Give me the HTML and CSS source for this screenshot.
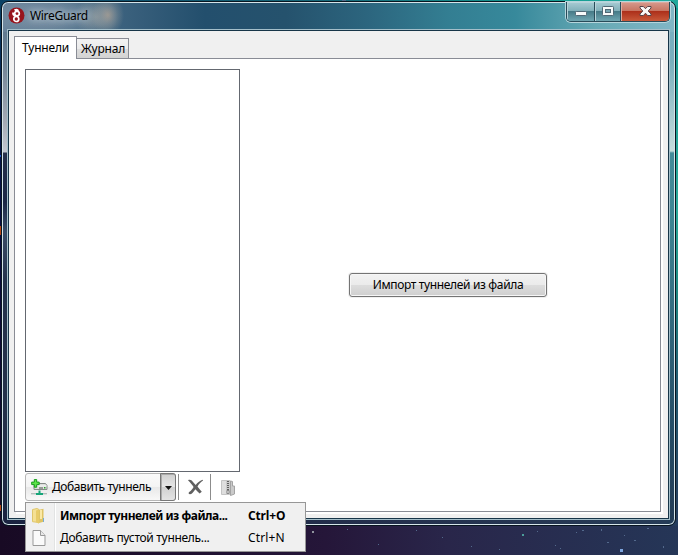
FILE: index.html
```html
<!DOCTYPE html>
<html lang="ru">
<head>
<meta charset="utf-8">
<title>WireGuard</title>
<link rel="stylesheet" href="styles.css">
</head>
<body>
<svg class="stars" width="678" height="555" viewBox="0 0 678 555" aria-hidden="true">
  <path fill="#1b55c9" d="M0 155h1v2H0z"/><path fill="#b54513" d="M0 226h1v9H0zM0 505h1v6H0z"/>
  <path fill="#4b9d9a" d="M522 534h2v2h-2z"/><path fill="#7da5de" d="M620 549h3v3h-3z"/><path fill="#91959f" d="M312 531h2v2h-2z"/>
  <path fill="#53698c" d="M537 531h1v1h-1zM576 532h1v1h-1zM607 542h2v1h-2zM634 540h2v1h-2zM647 528h2v1h-2zM663 546h1v2h-1zM555 545h1v1h-1zM560 548h1v1h-1zM582 530h2v1h-2zM601 529h1v2h-1zM624 535h1v1h-1zM347 529h1v1h-1zM378 544h1v1h-1zM442 537h1v1h-1zM471 546h1v1h-1zM416 530h1v1h-1zM499 549h1v1h-1zM342 0h4v1h-4z"/>
</svg>
<div class="window">
  <header class="titlebar">
    <svg class="logo" width="17" height="17" viewBox="0 0 17 17">
      <circle cx="8.500" cy="8.500" r="8" fill="#98151d"/>
      <path d="M6 2.300q3.800-1.600 5 .9L9.700 4.700 7 4z" fill="#fff"/>
      <g fill="none" stroke="#fff" stroke-width="1.700"><circle cx="9" cy="6.600" r="2.300"/><circle cx="8.300" cy="12" r="2.500"/><path d="M5 5.500q-.3 2.500 2.300 3.200"/></g>
    </svg>
    <span class="title">WireGuard</span>
    <div class="controls">
      <span class="control"><svg width="13" height="12" viewBox="0 0 13 12"><rect x=".5" y="6.500" width="11" height="4" rx=".8" fill="#f8fafa" stroke="#526976"/></svg></span>
      <span class="control"><svg width="13" height="12" viewBox="0 0 13 12"><rect x=".5" y="1.500" width="11" height="9" rx=".8" fill="#f8fafa" stroke="#526976"/><rect x="3.500" y="4.500" width="5" height="3" fill="#76a5b1" stroke="#526976"/></svg></span>
      <span class="control close"><svg width="13" height="12" viewBox="0 0 13 12"><path d="M1 1.500h3.400l2.100 2.200 2.100-2.200H12v1.500L9.200 6 12 9v1.500H8.600L6.500 8.200l-2.100 2.300H1V9l2.800-3L1 3z" fill="#faf7f6" stroke="#57444a"/></svg></span>
    </div>
  </header>
  <main class="client">
    <nav class="tabs"><span class="tab active">Туннели</span><span class="tab">Журнал</span></nav>
    <section class="pane">
      <div class="sidebar">
        <div class="list"></div>
        <div class="toolbar">
          <div class="split">
            <div class="add">
              <svg width="17" height="17" viewBox="0 0 17 17">
                <path d="M3 6.500 5 4.500h9.500l1.500 2v4H3z" fill="#dde0dd" stroke="#858a86"/><path d="M4 7h11.500" stroke="#f8f8f8"/><path d="M8 9h4" stroke="#555"/><path d="M13 8h1.500v1.500H13z" fill="#26a529"/>
                <path d="M7.500 11.500h2v2.500H12v2H5v-2h2.500z" fill="#15a578"/><path d="M0 14.500h5m7 0h4" stroke="#b2bdba"/><path d="M0 15.500h5m7 0h4" stroke="#d8dedc"/>
                <path d="M3.300.6h2.400v2.500h2.500v2.500H5.700v2.600H3.300V5.600H.7V3.100h2.600z" fill="#5ee448" stroke="#159c1b"/>
              </svg>
              <span class="add-text">Добавить туннель</span>
            </div>
            <div class="arrow"><svg width="7" height="4" viewBox="0 0 7 4"><path d="M0 0h7L3.500 4z" fill="#111"/></svg></div>
          </div>
          <span class="separator"></span>
          <svg class="delete" width="17" height="16" viewBox="0 0 17 16"><path d="M1 1.200c2-.8 3.600-.1 5 1.700l2.700 3C10.500 3.600 12.500 2 15.500.8l.6.700c-2.500 1.700-4.300 3.600-5.600 6 1.500 1.900 2.700 3.400 4.300 5.200l-2.200 1.800C10.800 13 9.500 11.700 8.400 10.300 6.500 12.600 5.400 15 3.200 15.300c-1.500.2-2.200-1.300-1-2.200 2-1.600 3.200-3 4.400-5.100C5 5.700 3.500 3.500 1 1.200z" fill="#606060"/></svg>
          <span class="separator second"></span>
          <svg class="zip" width="15" height="16" viewBox="0 0 15 16"><path d="M.5.500H9v14H.5z" fill="#dedede" stroke="#c4c4c4"/><path d="M9.500 1l2 .5V6h2v8l-4 1.500z" fill="#cacaca" stroke="#a4a4a4"/><path d="M5 1h4v14H5z" fill="#c9c9c9"/><path d="M7 1v9" stroke="#606060" stroke-width="2" stroke-dasharray="1 1"/><path d="M6 10.500h2v3H6z" fill="#eee" stroke="#888"/></svg>
        </div>
      </div>
      <div class="details"><button class="import">Импорт туннелей из файла</button></div>
    </section>
  </main>
</div>
<div class="menu">
  <div class="item default">
    <svg width="16" height="16" viewBox="0 0 16 16"><path d="M7 2 12.500.8v13L8 15z" fill="#dfc464"/><path d="M1.500 1.500 6 .5l2 1v13l-6.500-.8z" fill="#f4e095" stroke="#dfc66c"/><path d="M5 2.500 8 1.500V15.700L5 14z" fill="#e7cb69"/><path d="M9 2h2v9H9z" fill="#fae8a6"/><path d="M12 10h1v4h-1z" fill="#78acd0"/></svg>
    <span class="label">Импорт туннелей из файла...</span><span class="key">Ctrl+O</span>
  </div>
  <div class="item">
    <svg width="16" height="16" viewBox="0 0 16 16"><path d="M2 .5h7.500l4.500 5v10H2z" fill="#fafafa" stroke="#999"/><path d="M9.500.5v5H14" fill="#e7e7e7" stroke="#999"/></svg>
    <span class="label">Добавить пустой туннель...</span><span class="key">Ctrl+N</span>
  </div>
</div>
</body>
</html>
```
FILE: styles.css
```css
* { box-sizing: border-box; }
body {
  margin: 0; padding: 1px 2px 0 1px; width: 678px; height: 555px; overflow: hidden; position: relative;
  font: 12px/16px "Noto Sans", "Open Sans", sans-serif; color: #000;
  background:
    linear-gradient(90deg, #0a4265, #176b7b 50%, #139b91 80%, #20a99c) 0 0 / 678px 8px no-repeat,
    linear-gradient(#149b91, #2aaa9a 40%, #1d8c83 54%, #225c72 72%, #253b5b) 670px 0 / 8px 526px no-repeat,
    linear-gradient(#0a4265, #071e50 20%, #080a3d 45%, #170b29) 0 0 / 8px 526px no-repeat,
    linear-gradient(90deg, #180a24, #251639 48%, #29264a 66%, #253657);
}
.stars { position: absolute; left: 0; top: 0; }
span { white-space: nowrap; }
svg { display: block; flex: none; }
.window {
  position: relative; width: 675px; height: 525px; padding: 0 6px 6px; border: 1px solid #081520; border-radius: 7px;
  box-shadow: inset 0 0 0 1px #d5e4e9;
  background:
    linear-gradient(#607a90, #78899b 40px, #a4aab5 90px, #c2c6cf 120px, #26304b 121px, #1b2746 170px, #3a4c67 200px, #24324d 250px, #24314a 380px, #1a2340) 0 30px / 8px 495px no-repeat,
    linear-gradient(#78afc0, #79afbd 30px, #c5dddd 119px, #438b99 121px, #3d8693 180px, #336c80 280px, #244c65 400px, #233b55) 665px 30px / 10px 495px no-repeat,
    radial-gradient(ellipse 16px 20px at 106px 13px, #b5a697b0, #91989b80 45%, transparent),
    radial-gradient(ellipse 22px 20px at 94px 15px, #a3a9a8a0, transparent),
    radial-gradient(ellipse 65px 22px at 45px 14px, #8498a9, transparent),
    linear-gradient(90deg, #67829a, #3f6480 16%, #234f6d 30%, #25526d 42%, #2c657e 54%, #337e92 66%, #37899b 76%, #67a9b5 88%, #82b7c6) 0 0 / 675px 30px no-repeat,
    linear-gradient(90deg, #1a2340, #24304d 60%, #263c57);
}
.titlebar { display: flex; align-items: flex-start; height: 28px; }
.logo { margin: 5px 5px 0 0; }
.title { margin-top: 6px; letter-spacing: -.32px; text-shadow: 0 0 7px #b8c9d5, 0 0 7px #a8bdca; }
.controls { display: flex; width: 104px; height: 20px; margin: 0 -1px 0 auto; border: 1px solid #294b59; border-top: 0; border-radius: 0 0 5px 5px; box-shadow: 0 0 0 1px #b6d5dc; overflow: hidden; }
.control { display: flex; width: 28px; padding: 3px 0 0 8px; border-right: 1px solid #294b59; background: linear-gradient(#a8cbd3, #80afb9 48%, #477b88 50%, #6fa6b1); box-shadow: inset 1px 1px #b8d4db; }
.control + .control { width: 27px; padding-left: 7px; }
.control.close { width: 48px; padding-left: 18px; border: 0; background: linear-gradient(#d59a8e, #c77461 48%, #ad301b 50%, #c8593a); box-shadow: inset 1px 1px #dcaba0; }
.client { height: 489px; border: 1px solid #173548; box-shadow: 0 0 0 1px #a4bfca; background: #f0f0f0; padding: 5px 5px 4px; display: flex; flex-direction: column; }
.tabs { display: flex; align-items: flex-end; height: 23px; position: relative; z-index: 1; margin-bottom: -1px; }
.tab { width: 52px; height: 21px; border: 1px solid #898c95; border-left: 0; padding: 2px 0 0 4px; background: linear-gradient(#f3f3f3, #ebebeb 50%, #dddddd 51%, #d3d3d3); letter-spacing: -.2px; }
.tab.active { width: 63px; height: 23px; border-left: 1px solid #898c95; border-bottom: 0; padding: 3px 0 0 7px; background: #fff; letter-spacing: -.2px; }
.pane { display: flex; width: 647px; height: 454px; border: 1px solid #898c95; background: #fff; padding: 10px; box-shadow: 2px 2px #fff; }
.sidebar { width: 215px; }
.list { height: 403px; border: 1px solid #646870; }
.toolbar { display: flex; margin-top: 1px; }
.split { display: flex; width: 151px; height: 28px; border: 1px solid #b6b6b6; border-radius: 3px; background: linear-gradient(#fafafa, #f4f4f4 48%, #e8e8e8 50%, #f8f8f8); }
.add { display: flex; width: 134px; padding: 5px 0 0 5px; gap: 4px; }
.add-text { letter-spacing: -.42px; }
.arrow { width: 16px; height: 28px; margin: -1px -1px 0 0; padding: 12px 0 0 4px; border: 1px solid #777; border-radius: 0 3px 3px 0; background: linear-gradient(#cfcfcf, #e6e6e6 48%, #d0d0d0 50%, #e4e4e4); box-shadow: inset 1px 1px #aaa; flex: none; }
.separator { width: 1px; height: 26px; margin: 1px 0 0 2px; background: #8c8c8c; }
.delete { margin: 6px 0 0 8px; }
.separator.second { margin-left: 6px; }
.zip { margin: 7px 0 0 10px; }
.details { flex: 1; padding: 204px 0 0 109px; }
.import { display: block; width: 198px; height: 24px; padding: 0; border: 1px solid #747474; border-radius: 3px; background: linear-gradient(#f2f2f2, #ebebeb 48%, #dddddd 50%, #cfcfcf); box-shadow: inset 0 0 0 1px #f6f6f6, 0 0 0 1px #f0f0f0; font: inherit; color: inherit; letter-spacing: -.35px; }
.menu { position: absolute; left: 25px; top: 502px; width: 281px; height: 50px; padding: 2px; border: 1px solid #979797; background: linear-gradient(90deg, #f0f0f0 28px, #e2e3e3 28px 29px, #fff 29px 30px, #f0f0f0 30px); }
.item { display: flex; height: 22px; padding: 3px 0 0 3px; letter-spacing: -.31px; }
.label { width: 188px; margin-left: 13px; }
.default { font-weight: 700; letter-spacing: -.46px; }
.key { letter-spacing: .15px; }
.default .key { letter-spacing: -.15px; }
```
